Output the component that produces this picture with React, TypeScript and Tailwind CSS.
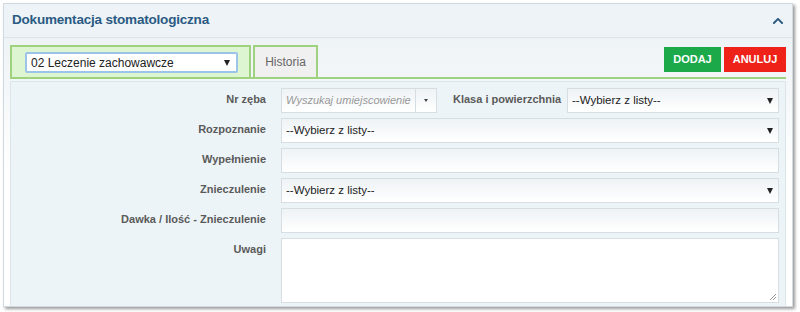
import { FaChevronUp } from "react-icons/fa";

const label = "text-right pr-[15px] pt-[3px] text-[11px] font-bold text-[#5a5a5a]";
const field = "h-[25px] border border-[#d6dee3] bg-gradient-to-b from-[#eef3f6] to-white";

function Caret() {
  return <span className="w-0 h-0 border-l-[3.5px] border-r-[3.5px] border-t-[6px] border-l-transparent border-r-transparent border-t-[#222]" />;
}

function Select({ text, className = "" }: { text: string; className?: string }) {
  return (
    <div className={`${field} flex items-center justify-between pl-[4px] pr-[5px] text-[11.5px] text-[#222] ${className}`}>
      <span>{text}</span>
      <Caret />
    </div>
  );
}

export default function App() {
  return (
    <div className="w-[800px] h-[312px] bg-white pt-[3px] pl-[3px] [font-family:'Liberation_Sans',Arial,sans-serif]">
      <div className="w-[790px] h-[304px] border border-[#d2dadf] shadow-[2px_2px_3px_rgba(0,0,0,0.4)] bg-white flex flex-col">
        <div className="h-[34px] shrink-0 flex items-center justify-between pl-[8px] pr-[8px] bg-[#edf3f6] border-b border-[#dbe4e9]">
          <span className="text-[13.5px] font-bold text-[#2a5a83] tracking-[-0.2px]">
            Dokumentacja stomatologiczna
          </span>
          <FaChevronUp className="text-[#2a5a83]" size={12} />
        </div>
        <div className="flex-1 flex flex-col px-[6px] pt-[7px] bg-gradient-to-b from-[#eef3f6] via-white to-white">
          <div className="h-[34px] shrink-0 flex items-stretch border-b-2 border-[#9ed27f]">
            <div className="w-[241px] border-2 border-b-0 border-[#9ed27f] bg-[#ddf5d0] pl-[13px] pt-[5px]">
              <div className="w-[213px] h-[21px] border-2 border-[#9cc4e8] bg-white rounded-[2px] flex items-center justify-between pl-[4px] pr-[6px] text-[12px] text-[#222]">
                <span>02 Leczenie zachowawcze</span>
                <Caret />
              </div>
            </div>
            <div className="ml-[2px] w-[65px] border-2 border-b-0 border-[#9ed27f] bg-[#f0f0f0] flex items-center justify-center text-[12px] text-[#666]">
              Historia
            </div>
            <div className="flex-1" />
            <div className="flex items-start pt-[2px] gap-[3px] text-[11px] font-bold text-white">
              <div className="w-[57px] h-[25px] bg-[#1ca94a] flex items-center justify-center">DODAJ</div>
              <div className="w-[62px] h-[25px] bg-[#ee2218] flex items-center justify-center">ANULUJ</div>
            </div>
          </div>
          <div className="flex-1 mt-[2px] bg-[#edf4f7] border border-[#dce5ea] border-b-0 pt-[6px] pr-[6px] grid grid-cols-[270px_1fr] gap-y-[5px] content-start">
            <div className={label}>Nr zęba</div>
            <div className="flex">
              <div className={`${field} w-[135px] flex items-center pl-[4px] text-[11px] italic text-[#999] whitespace-nowrap overflow-hidden`}>Wyszukaj umiejscowienie</div>
              <div className={`${field} w-[21px] border-l-0 flex items-center justify-center`}>
                <span className="w-0 h-0 border-l-[2px] border-r-[2px] border-t-[3px] border-l-transparent border-r-transparent border-t-[#444]" />
              </div>
              <div className="w-[130px] pl-[16px] pt-[3px] text-[11px] font-bold text-[#5a5a5a] whitespace-nowrap">
                Klasa i powierzchnia
              </div>
              <Select text="--Wybierz z listy--" className="flex-1" />
            </div>
            <div className={label}>Rozpoznanie</div>
            <Select text="--Wybierz z listy--" />
            <div className={label}>Wypełnienie</div>
            <div className={field} />
            <div className={label}>Znieczulenie</div>
            <Select text="--Wybierz z listy--" />
            <div className={label}>Dawka / Ilość - Znieczulenie</div>
            <div className={field} />
            <div className={label}>Uwagi</div>
            <div className="relative h-[65px] border border-[#d6dee3] bg-white">
              <svg className="absolute right-[1px] bottom-[1px]" width="8" height="8" viewBox="0 0 8 8">
                <path d="M7 1L1 7M7 4L4 7" stroke="#999" strokeWidth="1" />
              </svg>
            </div>
          </div>
        </div>
      </div>
    </div>
  );
}
